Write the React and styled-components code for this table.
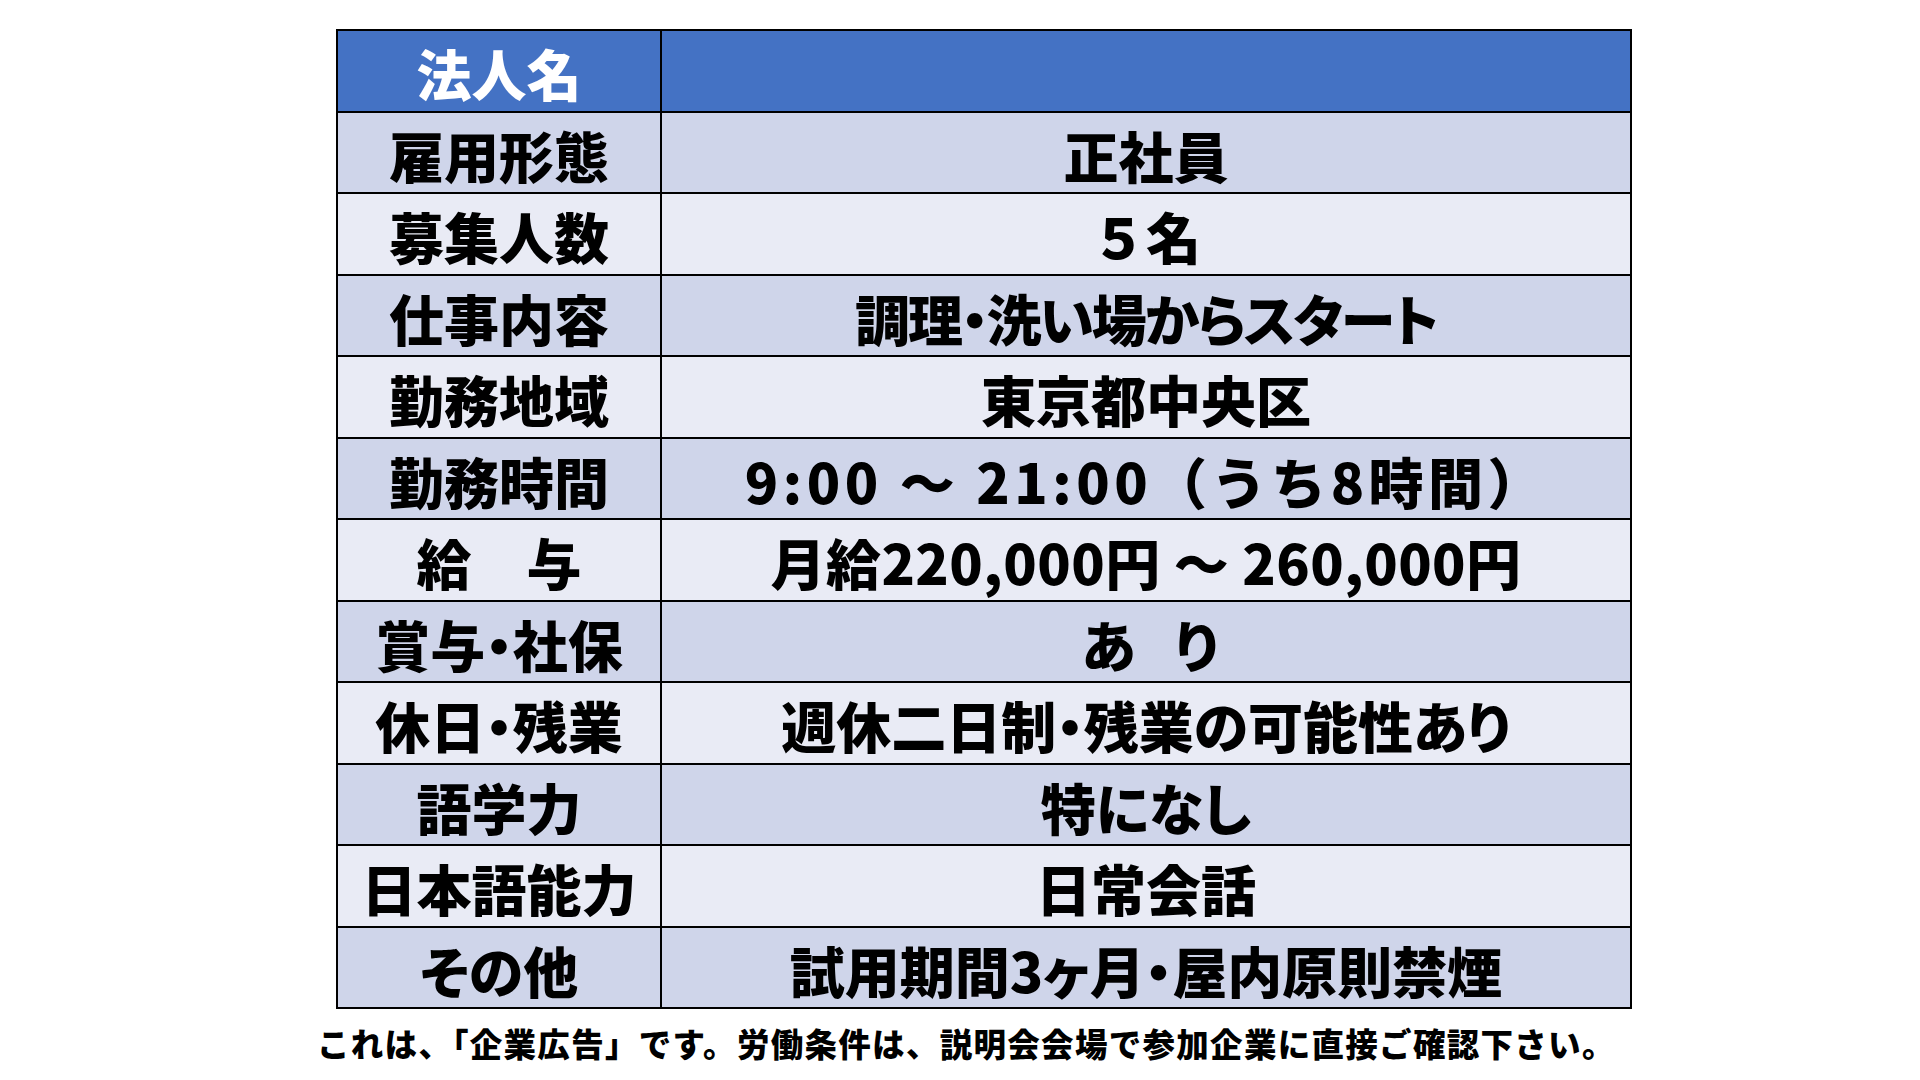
import React from 'react';
import styled, { createGlobalStyle } from 'styled-components';

const GlobalStyle = createGlobalStyle`
  html, body {
    margin: 0;
    padding: 0;
    background: #ffffff;
  }

  body {
    width: 1920px;
    height: 1080px;
    overflow: hidden;
    font-family: 'Noto Sans CJK JP', 'Noto Sans', sans-serif;
  }
`;

const Page = styled.div`
  width: 1920px;
  height: 1080px;
  padding-top: 29px;
  box-sizing: border-box;
  display: flex;
  flex-direction: column;
  align-items: flex-start;
`;

const Table = styled.div`
  margin-left: 336px;
  width: 1296px;
  height: 980px;
  box-sizing: border-box;
  padding: 2px;
  background: #000000;
  display: grid;
  grid-template-columns: 322px 1fr;
  grid-template-rows: repeat(12, 1fr);
  gap: 2px;
`;

const Cell = styled.div`
  display: flex;
  align-items: center;
  justify-content: center;
  background: ${({ $tone }) =>
    $tone === 'head' ? '#4472c4' : $tone === 'dark' ? '#cfd5ea' : '#e9ebf5'};
  color: ${({ $tone }) => ($tone === 'head' ? '#ffffff' : '#000000')};
  font-size: 55px;
  font-weight: 900;
  line-height: 1;
  white-space: nowrap;
  font-feature-settings: ${({ $plain }) => ($plain ? 'normal' : "'palt'")};
  letter-spacing: ${({ $spacing }) => $spacing || '0'};
  padding-top: 4px;
  box-sizing: border-box;
`;

const Note = styled.p`
  margin: 14px 0 0 317px;
  font-size: 32.5px;
  font-weight: 900;
  line-height: 1.2;
  letter-spacing: 1.3px;
  color: #000000;
  white-space: nowrap;
`;

const rows = [
  { label: '雇用形態', value: '正社員' },
  { label: '募集人数', value: '５名', plain: true },
  { label: '仕事内容', value: '調理・洗い場からスタート', spacing: '-2px' },
  { label: '勤務地域', value: '東京都中央区' },
  { label: '勤務時間', value: '9:00 ～ 21:00（うち8時間）', spacing: '4.5px', plain: true },
  { label: '給　与', value: '月給220,000円 ～ 260,000円', spacing: '0.5px' },
  { label: '賞与・社保', value: 'あ　り', spacing: '-8px' },
  { label: '休日・残業', value: '週休二日制・残業の可能性あり' },
  { label: '語学力', value: '特になし' },
  { label: '日本語能力', value: '日常会話' },
  { label: 'その他', value: '試用期間3ヶ月・屋内原則禁煙' },
];

export default function App() {
  return (
    <>
      <GlobalStyle />
      <Page>
        <Table>
          <Cell $tone='head'>法人名</Cell>
          <Cell $tone='head' />
          {rows.map((row, i) => {
            const tone = i % 2 === 0 ? 'dark' : 'light';
            return (
              <React.Fragment key={row.label}>
                <Cell $tone={tone}>{row.label}</Cell>
                <Cell $tone={tone} $spacing={row.spacing} $plain={row.plain}>
                  {row.value}
                </Cell>
              </React.Fragment>
            );
          })}
        </Table>
        <Note>これは、「企業広告」です。労働条件は、説明会会場で参加企業に直接ご確認下さい。</Note>
      </Page>
    </>
  );
}
